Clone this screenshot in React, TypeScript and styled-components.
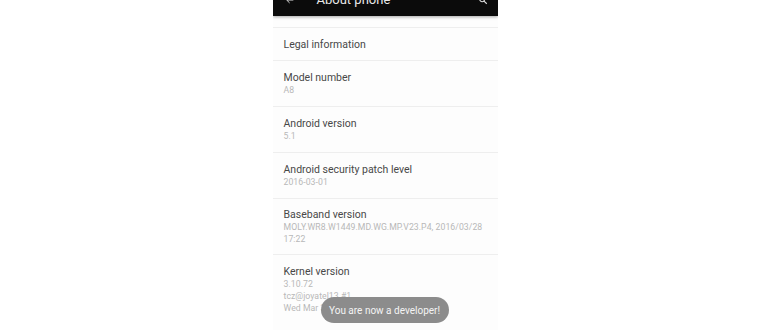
import React from "react";
import styled, { createGlobalStyle } from "styled-components";

const Global = createGlobalStyle`
  html, body { margin: 0; padding: 0; background: #ffffff; }
  body { font-family: Roboto, "Noto Sans", sans-serif; overflow: hidden; }
`;

const Screen = styled.div`
  width: 225px;
  height: 330px;
  margin: 0 auto;
  background: #fdfdfd;
  position: relative;
  overflow: hidden;
  display: flex;
  flex-direction: column;
`;

const Toolbar = styled.div`
  height: 16px;
  flex: none;
  background: #0b0b0b;
  box-shadow: 0 1px 3px rgba(0, 0, 0, 0.35);
  overflow: hidden;
  display: flex;
  align-items: center;
  padding: 0 10px 0 12px;
  position: relative;
  z-index: 1;
`;

const ToolRow = styled.div`
  display: flex;
  align-items: center;
  width: 100%;
  margin-top: -17px;
  color: #e8e8e8;
`;

const Title = styled.span`
  font-size: 13px;
  margin-left: 22px;
  flex: 1;
`;

const List = styled.div`
  display: flex;
  flex-direction: column;
  padding-top: 11px;
`;

const Item = styled.div<{ $pad: number; $padBottom?: number }>`
  border-top: 1px solid #eeeeee;
  padding: ${(p) => p.$pad}px 11px ${(p) => p.$padBottom ?? p.$pad}px 11px;
  display: flex;
  flex-direction: column;
`;

const Primary = styled.div`
  font-size: 10.5px;
  color: #484848;
  line-height: 13px;
`;

const Secondary = styled.div`
  font-size: 8.7px;
  color: #b8b8b8;
  line-height: 12px;
  letter-spacing: 0.05px;
`;

const Toast = styled.div`
  position: absolute;
  left: 48px;
  top: 297px;
  width: 128px;
  height: 26px;
  border-radius: 13px;
  background: #8c8c8c;
  color: #f4f4f4;
  font-size: 10px;
  display: flex;
  align-items: center;
  justify-content: center;
  font-family: "Roboto", sans-serif;
`;

export default function App() {
  return (
    <>
      <Global />
      <Screen>
        <Toolbar>
          <ToolRow>
            <svg width="10" height="10" viewBox="0 0 24 24" fill="none" stroke="#ddd" strokeWidth="2.4">
              <path d="M20 12H4M11 5l-7 7 7 7" />
            </svg>
            <Title>About phone</Title>
            <svg width="10" height="10" viewBox="0 0 24 24" fill="none" stroke="#ddd" strokeWidth="2.6">
              <circle cx="10" cy="10" r="6" />
              <path d="M14.5 14.5L21 21" />
            </svg>
          </ToolRow>
        </Toolbar>
        <List>
          <Item $pad={10} $padBottom={9}>
            <Primary>Legal information</Primary>
          </Item>
          <Item $pad={10}>
            <Primary>Model number</Primary>
            <Secondary>A8</Secondary>
          </Item>
          <Item $pad={10}>
            <Primary>Android version</Primary>
            <Secondary>5.1</Secondary>
          </Item>
          <Item $pad={10}>
            <Primary>Android security patch level</Primary>
            <Secondary>2016-03-01</Secondary>
          </Item>
          <Item $pad={9}>
            <Primary>Baseband version</Primary>
            <Secondary>MOLY.WR8.W1449.MD.WG.MP.V23.P4, 2016/03/28 17:22</Secondary>
          </Item>
          <Item $pad={10}>
            <Primary>Kernel version</Primary>
            <Secondary>3.10.72</Secondary>
            <Secondary>tcz@joyatel13 #1</Secondary>
            <Secondary>Wed Mar 30 10:21:35 CST 2016</Secondary>
          </Item>
        </List>
        <Toast>You are now a developer!</Toast>
      </Screen>
    </>
  );
}
